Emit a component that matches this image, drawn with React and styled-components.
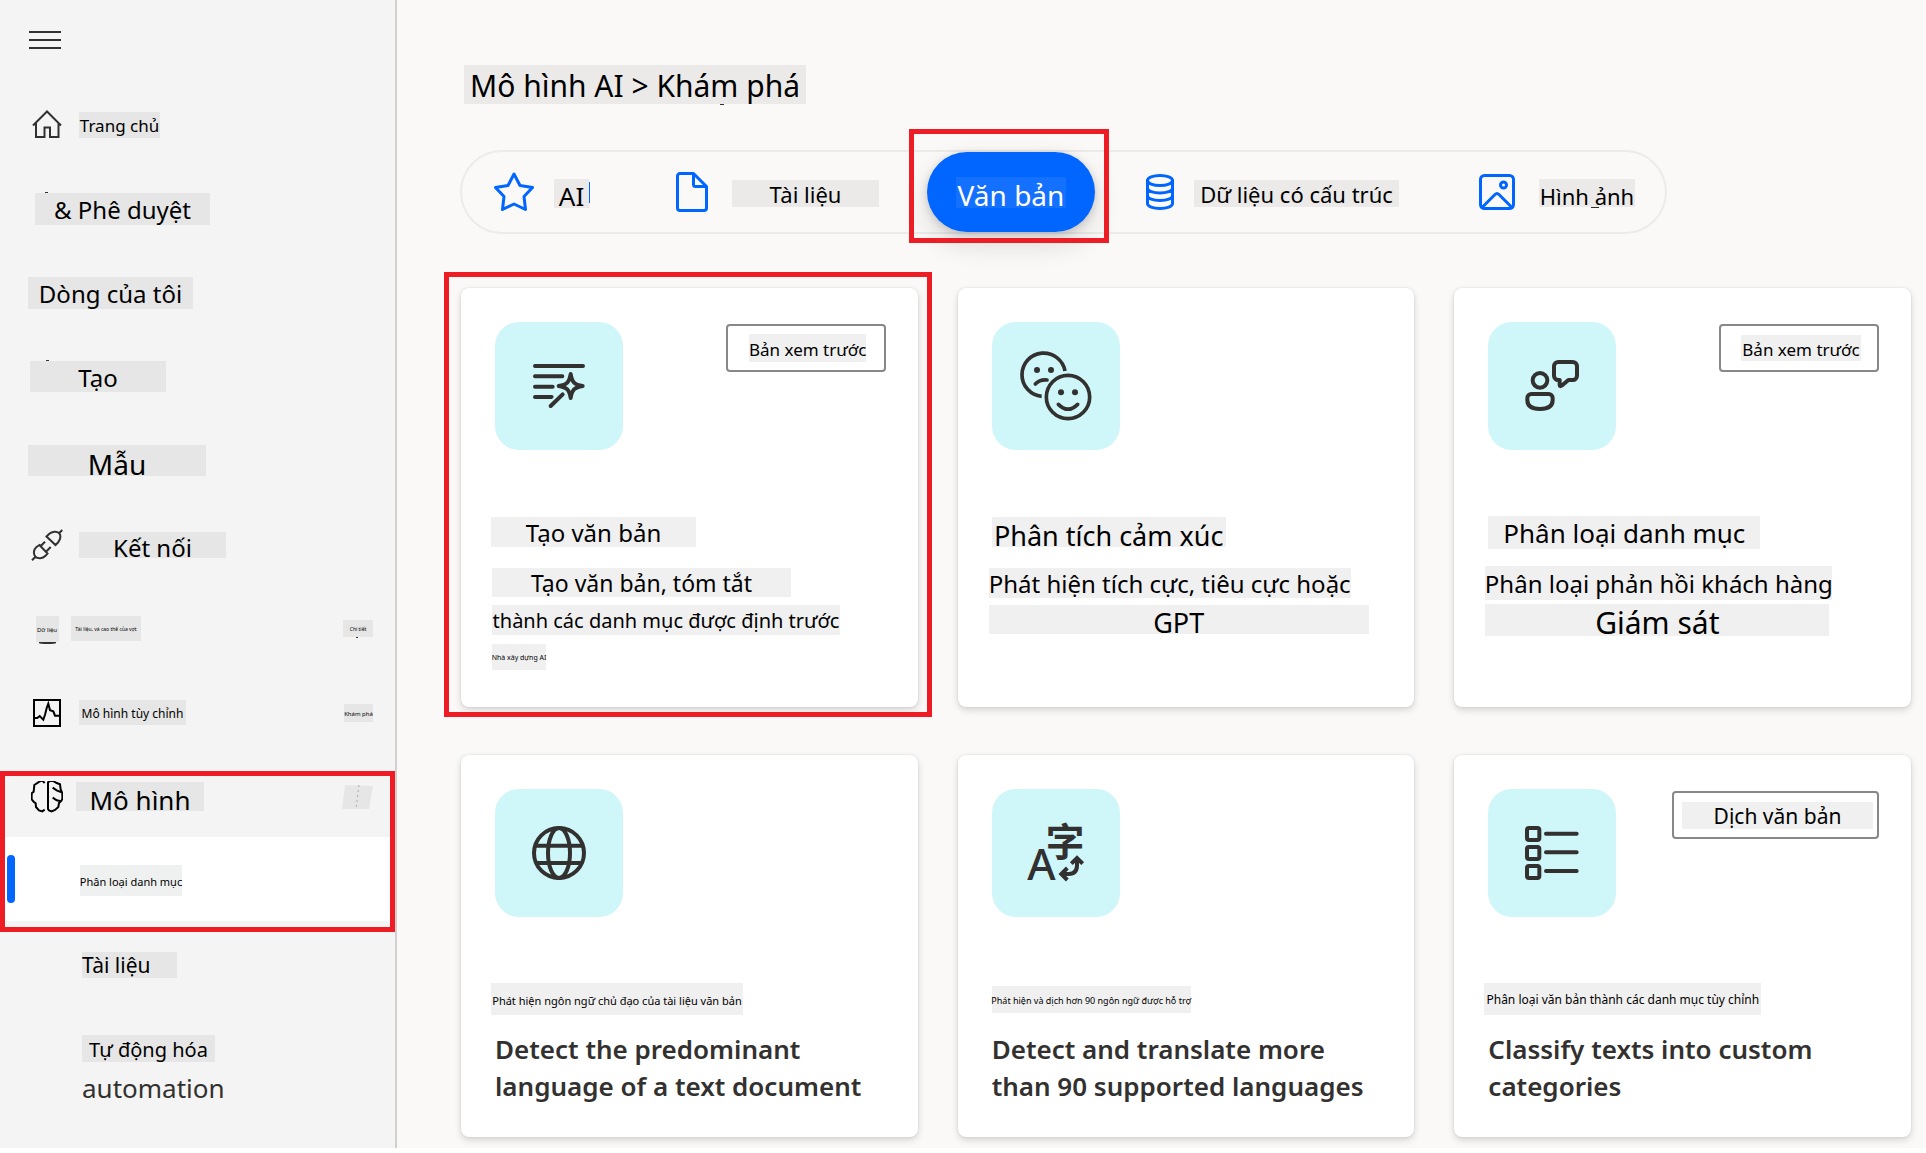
import React from "react";
import styled, { createGlobalStyle } from "styled-components";

const GlobalStyle = createGlobalStyle`
  *, *::before, *::after { box-sizing: border-box; }
  body {
    margin: 0;
    background: #ffffff;
    color: #000000;
    font-family: "Noto Sans", "Noto Sans CJK SC", sans-serif;
  }
`;

const BLUE = "#0066ff";

const Page = styled.div`
  display: flex;
  align-items: stretch;
`;

const Sidebar = styled.aside`
  flex: 0 0 397px;
  background: #f4f4f4;
  border-right: 2px solid #d0d0d0;
`;

const MenuButton = styled.button`
  display: flex;
  flex-direction: column;
  justify-content: center;
  gap: 6px;
  width: 90px;
  height: 81px;
  padding: 0 29px 2px;
  border: 0;
  background: none;
`;

const MenuLine = styled.span`
  width: 32px;
  height: 2px;
  background: #323130;
`;

const NavGroup = styled.div`
  position: relative;
`;

const NavItem = styled.a`
  position: relative;
  display: flex;
  align-items: center;
  gap: ${(p) => p.$gap ?? 16}px;
  height: 84px;
  padding: 3px 22px 0 ${(p) => p.$indent ?? 31}px;
  background: ${(p) => (p.$selected ? "#ffffff" : "transparent")};
  color: inherit;
  text-decoration: none;
`;

const NavStack = styled.a`
  display: flex;
  flex-direction: column;
  align-items: flex-start;
  padding: 30px 22px 0 82px;
  color: #323130;
  font-size: 26px;
  line-height: 52px;
  text-decoration: none;
`;

const Indicator = styled.span`
  position: absolute;
  left: 7px;
  top: 18px;
  width: 8px;
  height: 48px;
  border-radius: 4px;
  background: ${BLUE};
`;

const NavIcon = styled.svg`
  flex: none;
  width: 32px;
  height: 32px;
  fill: none;
  stroke: ${(p) => p.$color ?? "#323130"};
  stroke-width: 2;
`;

const NavIconSlot = styled.span`
  display: flex;
  justify-content: center;
  width: 32px;
`;

const NavEnd = styled.span`
  display: flex;
  margin-left: auto;
`;

const tones = {
  nav: "#e6e6e6",
  selected: "#eff1f1",
  page: "#ebeae9",
  card: "#f0f0f0",
  active: "#1470ff",
};

const Chip = styled.span`
  position: relative;
  display: inline-flex;
  align-items: center;
  justify-content: ${(p) => (p.$start ? "flex-start" : "center")};
  flex: none;
  width: ${(p) => p.$w}px;
  height: ${(p) => p.$h}px;
  padding: ${(p) => (p.$low ? 6 : 2)}px 0 0;
  background: ${(p) => tones[p.$tone]};
  color: ${(p) => (p.$tone === "active" ? "#ffffff" : "#000000")};
  font-size: ${(p) => p.$size}px;
  font-weight: 400;
  line-height: 1;
  white-space: nowrap;
`;

const Speck = styled.span`
  position: absolute;
  left: ${(p) => p.$x}px;
  ${(p) => (p.$below ? "top: 100%;" : "bottom: 100%;")}
  width: ${(p) => p.$w ?? 3}px;
  height: ${(p) => p.$h ?? 1}px;
  background: #323130;
  border-radius: ${(p) => (p.$round ? "0 0 50% 50%" : "0")};
`;

const Caret = styled.span`
  width: 1px;
  height: 21px;
  margin-left: -20px;
  background: ${BLUE};
`;

const Callout = styled.span`
  position: absolute;
  z-index: 2;
  inset: ${(p) => p.$inset};
  border: 5px solid #ee1c25;
  pointer-events: none;
`;

const Main = styled.main`
  flex: 1;
  min-width: 0;
  padding: 65px 15px 11px 63px;
  background: #faf9f8;
`;

const Heading = styled.h1`
  display: flex;
  margin: 0 0 46px;
  padding-left: 4px;
`;

const TabBar = styled.div`
  display: grid;
  grid-template-columns: 182px 283px 187px 333px 218px;
  align-items: center;
  width: fit-content;
  height: 84px;
  margin-bottom: 54px;
  border: 2px solid #edebe9;
  border-radius: 42px;
`;

const Tab = styled.button`
  display: flex;
  align-items: center;
  gap: 20px;
  height: 80px;
  padding: 0 0 0 32px;
  border: 0;
  background: none;
  font-family: inherit;

  ${Chip} {
    margin-top: 2px;
  }
`;

const ActiveTab = styled.button`
  position: relative;
  display: flex;
  align-items: center;
  justify-content: center;
  width: 168px;
  height: 80px;
  padding: 0;
  border: 0;
  border-radius: 40px;
  background: ${BLUE};
  box-shadow: 0 12px 28px rgba(0, 0, 0, 0.13), 0 2px 8px rgba(0, 0, 0, 0.16);
  font-family: inherit;
`;

const TabIcon = styled.svg`
  flex: none;
  width: ${(p) => p.$w}px;
  height: 40px;
  fill: none;
  stroke: ${BLUE};
  stroke-width: 3;
  stroke-linejoin: round;
  stroke-linecap: round;
`;

const CardGrid = styled.section`
  display: grid;
  grid-template-columns: repeat(3, minmax(0, 1fr));
  gap: 48px 40px;
  margin-left: 1px;
`;

const Card = styled.article`
  position: relative;
  padding: 34px 32px 32px 34px;
  border-radius: 8px;
  background: #ffffff;
  box-shadow: 0 0 2px rgba(0, 0, 0, 0.12), 0 3px 7px rgba(0, 0, 0, 0.15);
`;

const CardTop = styled.div`
  display: flex;
  justify-content: space-between;
  align-items: flex-start;
  margin-bottom: 65px;
`;

const Tile = styled.svg`
  width: 128px;
  height: 128px;
  border-radius: 24px;
  background: #cff6f9;
  fill: none;
  stroke: #323130;
  stroke-width: 12;
  stroke-linecap: round;
  stroke-linejoin: round;
`;

const Badge = styled.span`
  display: flex;
  align-items: center;
  justify-content: center;
  width: ${(p) => p.$w}px;
  height: 48px;
  margin-top: 2px;
  padding-left: 4px;
  border: 2px solid #8a8886;
  border-radius: 4px;
`;

const CardTitle = styled.h2`
  display: flex;
  align-items: center;
  height: 34px;
  margin: 0 0 15px ${(p) => p.$shift ?? -4}px;
`;

const CardText = styled.div`
  margin-left: -3px;
`;

const CardLine = styled.div`
  display: flex;
  align-items: center;
  height: 37px;
`;

const CardBody = styled.p`
  margin: 0;
  color: #323130;
  font-size: 26px;
  font-weight: 600;
  line-height: 37px;
`;

const Dots = styled.g`
  fill: #323130;
  stroke: none;
`;

const Glyphs = styled.g`
  fill: #323130;
  stroke: none;
  font-family: "Noto Sans", "Noto Sans CJK SC", sans-serif;
`;

const WriteIcon = () => (
  <Tile viewBox="165 186 384 384" aria-hidden="true">
    <path d="M285 318H429M285 349H367M285 380H338M285 411H335" />
    <path d="M332 438L368 403" stroke="#cff6f9" strokeWidth="24" />
    <path d="M332 438L368 403" />
    <path d="M392 342C396 367 403 374 428 378C403 382 396 389 392 414C388 389 381 382 356 378C381 374 388 367 392 342Z" />
  </Tile>
);

const FacesIcon = () => (
  <Tile viewBox="156 156 384 384" aria-hidden="true">
    <g strokeWidth="11">
      <path d="M375 303A65 65 0 1 0 305 379" strokeLinecap="butt" />
      <path d="M286 342Q299 328 321 330" />
      <circle cx="384" cy="381" r="65" />
      <path d="M355 403Q384 432 413 403" />
    </g>
    <Dots>
      <circle cx="291" cy="300" r="9" />
      <circle cx="333" cy="300" r="9" />
      <circle cx="363" cy="367" r="9" />
      <circle cx="405" cy="367" r="9" />
    </Dots>
  </Tile>
);

const FeedbackIcon = () => (
  <Tile viewBox="177 156 384 384" aria-hidden="true">
    <circle cx="333" cy="331" r="22" />
    <path d="M307 372H359a12 12 0 0 1 12 12v6c0 20-14 27-38 27s-38-7-38-27v-6a12 12 0 0 1 12-12z" />
    <path d="M388 276h43a13 13 0 0 1 13 13v28a13 13 0 0 1-13 13h-13l-20 17q-6 4-6-3v-14h-4a13 13 0 0 1-13-13v-28a13 13 0 0 1 13-13z" />
  </Tile>
);

const GlobeIcon = () => (
  <Tile viewBox="165 147 384 384" aria-hidden="true">
    <circle cx="357" cy="339" r="75" />
    <ellipse cx="357" cy="339" rx="33" ry="75" />
    <path d="M287 317H427M287 369H427" strokeLinecap="butt" />
  </Tile>
);

const TranslateIcon = () => (
  <Tile viewBox="156 147 384 384" aria-hidden="true">
    <Glyphs>
      <text x="262" y="420" fontSize="130" fontWeight="500">A</text>
      <text x="317" y="349" fontSize="116" fontWeight="700">字</text>
    </Glyphs>
    <g strokeLinecap="butt" strokeLinejoin="miter">
      <path d="M411 356V376Q411 402 386 402H366" />
      <path d="M394 371L411 354L428 371M382 384L364 402L382 420" />
    </g>
  </Tile>
);

const ListIcon = () => (
  <Tile viewBox="177 147 384 384" aria-hidden="true">
    <rect x="294" y="264" width="37" height="36" rx="6" />
    <rect x="294" y="321" width="37" height="36" rx="6" />
    <rect x="294" y="378" width="37" height="36" rx="6" />
    <path d="M351 281H443M351 337H443M351 393H443" />
  </Tile>
);

const CardChip = ({ children, ...rest }) => (
  <Chip $tone="card" {...rest}>{children}</Chip>
);

export default function App() {
  return (
    <>
      <GlobalStyle />
      <Page>
        <Sidebar>
          <MenuButton aria-label="Menu">
            <MenuLine />
            <MenuLine />
            <MenuLine />
          </MenuButton>
          <nav>
            <NavItem href="#home">
              <NavIcon viewBox="0 0 32 32" aria-hidden="true">
                <path d="M2 16.5L16 2.5L30 16.5M5 14V28H13.5V18.5H19V28H27.5V14" />
              </NavIcon>
              <Chip $tone="nav" $w={81} $h={26} $size={17}>Trang chủ</Chip>
            </NavItem>
            <NavItem href="#approvals" $indent={35}>
              <Chip $tone="nav" $w={175} $h={32} $size={24}>
                &amp; Phê duyệt
                <Speck $x={10} />
              </Chip>
            </NavItem>
            <NavItem href="#flows" $indent={28}>
              <Chip $tone="nav" $w={165} $h={32} $size={24}>Dòng của tôi</Chip>
            </NavItem>
            <NavItem href="#create" $indent={30}>
              <Chip $tone="nav" $w={136} $h={31} $size={24}>
                Tạo
                <Speck $x={16} />
              </Chip>
            </NavItem>
            <NavItem href="#templates" $indent={28}>
              <Chip $tone="nav" $w={178} $h={31} $size={28} $low>Mẫu</Chip>
            </NavItem>
            <NavItem href="#connections">
              <NavIcon viewBox="0 0 32 32" aria-hidden="true">
                <path d="M8.5 16L16.5 24.5L14.5 26.8C11.5 29.8 7 30 4.5 27.8C2 25 2.5 20.5 5.5 18ZM1 31.3L4.5 27.8M9.5 17.3L14 12.7M15 22.7L19.7 18" />
                <path d="M15.5 7.5L24.5 16L27 13.5C30 10 30 6 28 4C25.5 1.8 21 2.5 18 5ZM28 4.3L31.3 1" />
              </NavIcon>
              <Chip $tone="nav" $w={147} $h={26} $size={24} $low>Kết nối</Chip>
            </NavItem>
            <NavItem href="#data" $gap={8}>
              <NavIconSlot>
                <Chip $tone="nav" $w={23} $h={26} $size={6}>
                  Dữ liệu
                  <Speck $x={3} $w={17} $h={2} $below $round />
                </Chip>
              </NavIconSlot>
              <Chip $tone="nav" $w={70} $h={25} $size={5}>Tài liệu, và cao thể của vợt</Chip>
              <NavEnd>
                <Chip $tone="nav" $w={30} $h={17} $size={5}>
                  Chi tiết
                  <Speck $x={13} $w={2} $below />
                </Chip>
              </NavEnd>
            </NavItem>
            <NavItem href="#monitor">
              <NavIcon viewBox="0 0 32 32" $color="#000000" aria-hidden="true">
                <rect x="3" y="3" width="26" height="26" />
                <path d="M3 21H6.3L8.7 19L12.3 22.7L14 17.7L15.7 11L17.3 6.7L19 13.3L22.3 14.3L24 18.7H29" />
              </NavIcon>
              <Chip $tone="nav" $w={107} $h={25} $size={12}>Mô hình tùy chỉnh</Chip>
              <NavEnd>
                <Chip $tone="nav" $w={29} $h={18} $size={6}>Khám phá</Chip>
              </NavEnd>
            </NavItem>
            <NavGroup>
              <NavItem href="#ai" $gap={13}>
                <NavIcon viewBox="93 60 96 96" $color="#000000" aria-hidden="true">
                  <path
                    strokeWidth="6"
                    d="M134 66L127 59L118 62L103 72L101 92L95 97V115L101 122L107 127L108 138L117 148L127 151L134 146M144 64L150 60L158 59L170 66L180 70L182 85L187 97V115L182 122L177 126L175 138L165 147L155 151L147 148L144 144ZM158 80L170 88L185 94M158 110L170 118L183 121"
                  />
                </NavIcon>
                <Chip $tone="nav" $w={128} $h={29} $size={26} $low>Mô hình</Chip>
                <NavEnd>
                  <svg width="31" height="24" viewBox="0 0 31 24" aria-hidden="true">
                    <path d="M3 0L31 1L27 24H0Z" fill="#e6e6e6" />
                    <path d="M17 0L14 24" stroke="#aaaaaa" strokeDasharray="2 3" />
                  </svg>
                </NavEnd>
              </NavItem>
              <NavItem href="#explore" $indent={80} $selected>
                <Indicator />
                <Chip $tone="selected" $w={102} $h={31} $size={11}>Phân loại danh mục</Chip>
              </NavItem>
              <Callout $inset="18px 0 -11px 0" />
            </NavGroup>
            <NavItem href="#documents" $indent={82}>
              <Chip $tone="nav" $w={95} $h={26} $size={21} $start>Tài liệu</Chip>
            </NavItem>
            <NavStack href="#automation">
              <Chip $tone="nav" $w={133} $h={27} $size={20}>Tự động hóa</Chip>
              automation
            </NavStack>
          </nav>
        </Sidebar>
        <Main>
          <Heading>
            <Chip $tone="page" $w={342} $h={39} $size={30}>
              Mô hình AI &gt; Khám phá
              <Speck $x={256} $w={4} $below />
            </Chip>
          </Heading>
          <TabBar>
            <Tab>
              <TabIcon $w={40} viewBox="0 0 40 40" aria-hidden="true">
                <path d="M20 2L26 13.5L38.5 15.5L30 24.5L31.5 37.5L20 32L8.5 37.5L10 24.5L1.5 15.5L14 13.5Z" />
              </TabIcon>
              <Chip $tone="page" $w={35} $h={29} $size={26} $low>AI</Chip>
              <Caret />
            </Tab>
            <Tab>
              <TabIcon $w={36} viewBox="0 0 36 40" aria-hidden="true">
                <path d="M4 1.5h13.5l13 13V36a2.5 2.5 0 0 1-2.5 2.5H4A2.5 2.5 0 0 1 1.5 36V4A2.5 2.5 0 0 1 4 1.5zM17.5 2v10.5a2 2 0 0 0 2 2H30" />
              </TabIcon>
              <Chip $tone="page" $w={147} $h={27} $size={22}>Tài liệu</Chip>
            </Tab>
            <ActiveTab>
              <Chip $tone="active" $w={110} $h={31} $size={28} $low>Văn bản</Chip>
              <Callout $inset="-23px -14px -11px -18px" />
            </ActiveTab>
            <Tab>
              <TabIcon $w={28} viewBox="0 -2 28 40" aria-hidden="true">
                <ellipse cx="14" cy="6.5" rx="12.5" ry="5" />
                <path d="M1.5 6.5V29.5c0 3 5.6 5 12.5 5s12.5-2 12.5-5V6.5M1.5 14c0 3 5.6 5 12.5 5s12.5-2 12.5-5M1.5 21.5c0 3 5.6 5 12.5 5s12.5-2 12.5-5" />
              </TabIcon>
              <Chip $tone="page" $w={205} $h={27} $size={22}>Dữ liệu có cấu trúc</Chip>
            </Tab>
            <Tab>
              <TabIcon $w={40} viewBox="0 -2 40 40" aria-hidden="true">
                <rect x="1.5" y="1.5" width="33" height="33" rx="4" />
                <circle cx="24.5" cy="11" r="3" />
                <path d="M3 33.5L16 20.5Q18 18.5 20 20.5L33 33.5" />
              </TabIcon>
              <Chip $tone="page" $w={96} $h={28} $size={22} $low>
                Hình ảnh
                <Speck $x={52} $w={8} $below />
              </Chip>
            </Tab>
          </TabBar>
          <CardGrid>
            <Card>
              <CardTop>
                <WriteIcon />
                <Badge $w={160}>
                  <CardChip $w={117} $h={28} $size={17}>Bản xem trước</CardChip>
                </Badge>
              </CardTop>
              <CardTitle>
                <CardChip $w={205} $h={30} $size={24}>Tạo văn bản</CardChip>
              </CardTitle>
              <CardText>
                <CardLine><CardChip $w={299} $h={29} $size={23}>Tạo văn bản, tóm tắt</CardChip></CardLine>
                <CardLine><CardChip $w={348} $h={30} $size={20}>thành các danh mục được định trước</CardChip></CardLine>
                <CardLine><CardChip $w={54} $h={26} $size={7}>Nhà xây dựng AI</CardChip></CardLine>
              </CardText>
              <Callout $inset="-16px -14px -10px -17px" />
            </Card>
            <Card>
              <CardTop><FacesIcon /></CardTop>
              <CardTitle $shift={0}>
                <CardChip $w={234} $h={30} $size={27} $low>Phân tích cảm xúc</CardChip>
              </CardTitle>
              <CardText>
                <CardLine><CardChip $w={362} $h={30} $size={24}>Phát hiện tích cực, tiêu cực hoặc</CardChip></CardLine>
                <CardLine><CardChip $w={380} $h={29} $size={27} $low>GPT</CardChip></CardLine>
              </CardText>
            </Card>
            <Card>
              <CardTop>
                <FeedbackIcon />
                <Badge $w={160}>
                  <CardChip $w={120} $h={26} $size={17}>Bản xem trước</CardChip>
                </Badge>
              </CardTop>
              <CardTitle $shift={0}>
                <CardChip $w={272} $h={33} $size={26}>Phân loại danh mục</CardChip>
              </CardTitle>
              <CardText>
                <CardLine><CardChip $w={347} $h={34} $size={24}>Phân loại phản hồi khách hàng</CardChip></CardLine>
                <CardLine><CardChip $w={344} $h={32} $size={30} $low>Giám sát</CardChip></CardLine>
              </CardText>
            </Card>
            <Card>
              <CardTop><GlobeIcon /></CardTop>
              <CardTitle>
                <CardChip $w={252} $h={32} $size={11}>Phát hiện ngôn ngữ chủ đạo của tài liệu văn bản</CardChip>
              </CardTitle>
              <CardBody>Detect the predominant language of a text document</CardBody>
            </Card>
            <Card>
              <CardTop><TranslateIcon /></CardTop>
              <CardTitle $shift={0}>
                <CardChip $w={199} $h={27} $size={9}>Phát hiện và dịch hơn 90 ngôn ngữ được hỗ trợ</CardChip>
              </CardTitle>
              <CardBody>Detect and translate more than 90 supported languages</CardBody>
            </Card>
            <Card>
              <CardTop>
                <ListIcon />
                <Badge $w={207}>
                  <CardChip $w={191} $h={27} $size={21}>Dịch văn bản</CardChip>
                </Badge>
              </CardTop>
              <CardTitle>
                <CardChip $w={277} $h={32} $size={12}>Phân loại văn bản thành các danh mục tùy chỉnh</CardChip>
              </CardTitle>
              <CardBody>Classify texts into custom categories</CardBody>
            </Card>
          </CardGrid>
        </Main>
      </Page>
    </>
  );
}
